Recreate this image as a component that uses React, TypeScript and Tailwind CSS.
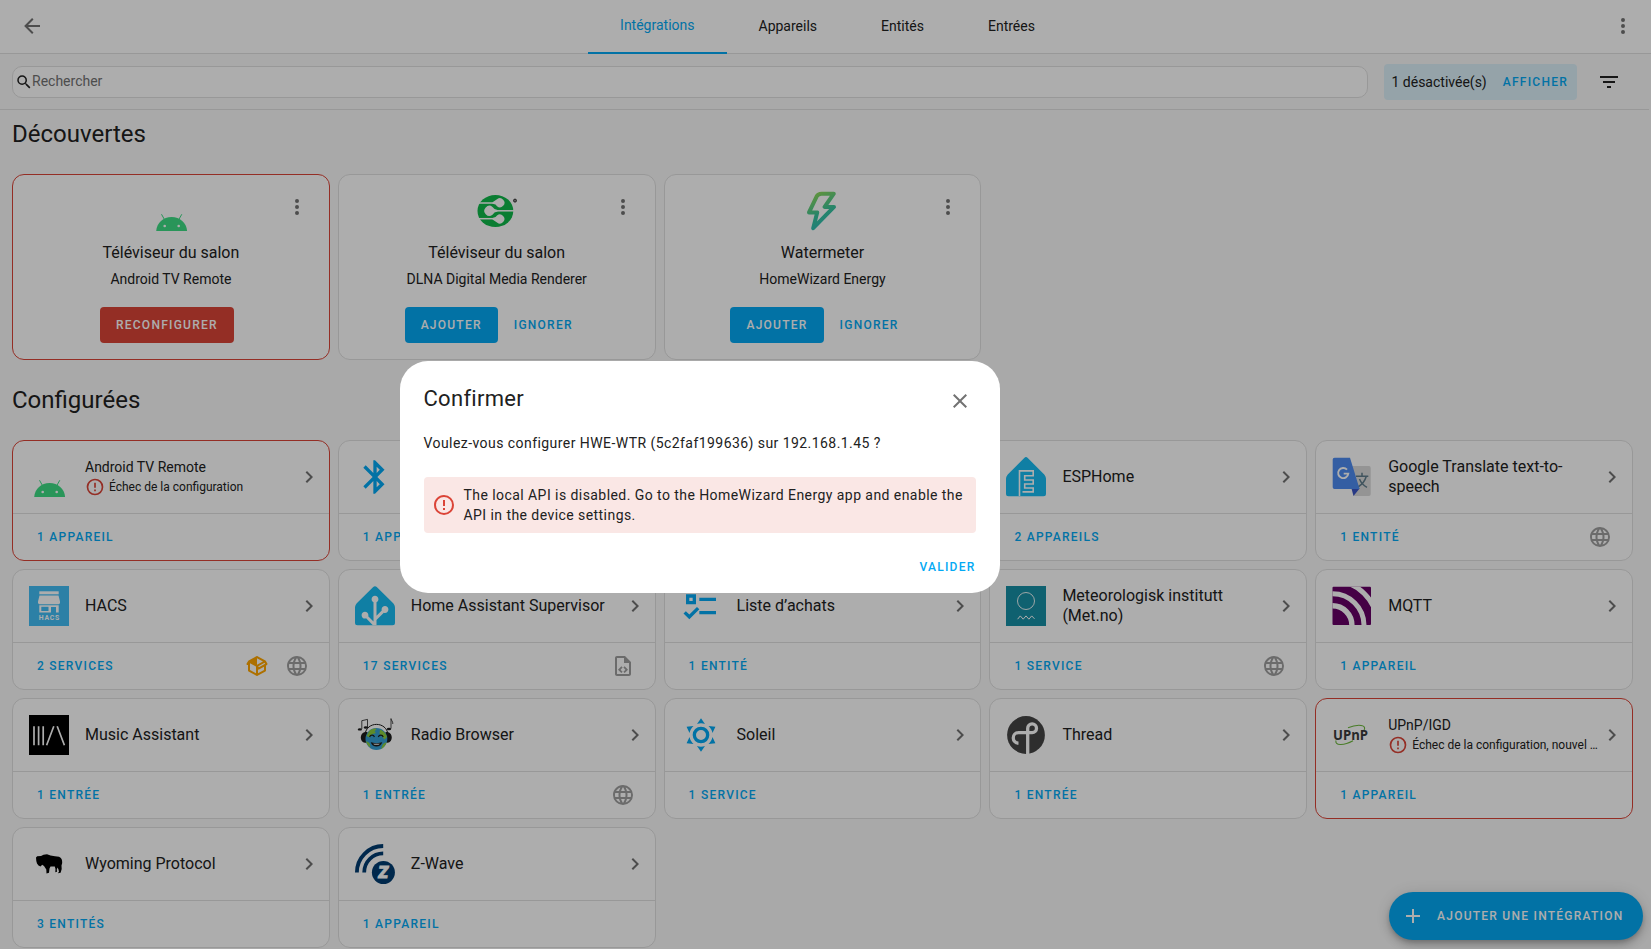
import React from "react";

const paths = {
  back: "M20,11V13H8L13.5,18.5L12.08,19.92L4.16,12L12.08,4.08L13.5,5.5L8,11H20Z",
  dots: "M12,16A2,2 0 0,1 14,18A2,2 0 0,1 12,20A2,2 0 0,1 10,18A2,2 0 0,1 12,16M12,10A2,2 0 0,1 14,12A2,2 0 0,1 12,14A2,2 0 0,1 10,12A2,2 0 0,1 12,10M12,4A2,2 0 0,1 14,6A2,2 0 0,1 12,8A2,2 0 0,1 10,6A2,2 0 0,1 12,4Z",
  magnify:
    "M9.5,3A6.5,6.5 0 0,1 16,9.5C16,11.11 15.41,12.59 14.44,13.73L14.71,14H15.5L20.5,19L19,20.5L14,15.5V14.71L13.73,14.44C12.59,15.41 11.11,16 9.5,16A6.5,6.5 0 0,1 3,9.5A6.5,6.5 0 0,1 9.5,3M9.5,5C7,5 5,7 5,9.5C5,12 7,14 9.5,14C12,14 14,12 14,9.5C14,7 12,5 9.5,5Z",
  filter: "M6,13H18V11H6M3,6V8H21V6M10,18H14V16H10V18Z",
  web: "M16.36,14C16.44,13.34 16.5,12.68 16.5,12C16.5,11.32 16.44,10.66 16.36,10H19.74C19.9,10.64 20,11.31 20,12C20,12.69 19.9,13.36 19.74,14M14.59,19.56C15.19,18.45 15.65,17.25 15.97,16H18.92C17.96,17.65 16.43,18.93 14.59,19.56M14.34,14H9.66C9.56,13.34 9.5,12.68 9.5,12C9.5,11.32 9.56,10.65 9.66,10H14.34C14.43,10.65 14.5,11.32 14.5,12C14.5,12.68 14.43,13.34 14.34,14M12,19.96C11.17,18.76 10.5,17.43 10.09,16H13.91C13.5,17.43 12.83,18.76 12,19.96M8,8H5.08C6.03,6.34 7.57,5.06 9.4,4.44C8.8,5.55 8.35,6.75 8,8M5.08,16H8C8.35,17.25 8.8,18.45 9.4,19.56C7.57,18.93 6.03,17.65 5.08,16M4.26,14C4.1,13.36 4,12.69 4,12C4,11.31 4.1,10.64 4.26,10H7.64C7.56,10.66 7.5,11.32 7.5,12C7.5,12.68 7.56,13.34 7.64,14M12,4.03C12.83,5.23 13.5,6.57 13.91,8H10.09C10.5,6.57 11.17,5.23 12,4.03M18.92,8H15.97C15.65,6.75 15.19,5.55 14.59,4.44C16.43,5.07 17.96,6.34 18.92,8M12,2C6.47,2 2,6.5 2,12A10,10 0 0,0 12,22A10,10 0 0,0 22,12A10,10 0 0,0 12,2Z",
  fileCode:
    "M14 2H6C4.89 2 4 2.9 4 4V20C4 21.11 4.89 22 6 22H18C19.11 22 20 21.11 20 20V8L14 2M18 20H6V4H13V9H18V20M9.54 15.65L11.63 17.74L10.35 19L7 15.65L10.35 12.3L11.63 13.56L9.54 15.65M17 15.65L13.65 19L12.38 17.74L14.47 15.65L12.38 13.56L13.65 12.3L17 15.65Z",
  pack: "M2,10.96C1.5,10.68 1.35,10.07 1.63,9.59L3.13,7C3.24,6.8 3.41,6.66 3.6,6.58L11.43,2.18C11.59,2.06 11.79,2 12,2C12.21,2 12.41,2.06 12.57,2.18L20.47,6.62C20.66,6.72 20.82,6.88 20.91,7.08L22.36,9.6C22.64,10.08 22.47,10.69 22,10.96L21,11.54V16.5C21,16.88 20.79,17.21 20.47,17.38L12.57,21.82C12.41,21.94 12.21,22 12,22C11.79,22 11.59,21.94 11.43,21.82L3.53,17.38C3.21,17.21 3,16.88 3,16.5V10.96C2.7,11.13 2.32,11.14 2,10.96M12,4.15V4.15L12,10.85V10.85L17.96,7.5L12,4.15M5,15.91L11,19.29V12.58L5,9.21V15.91M19,15.91V12.69L14,15.59C13.67,15.77 13.3,15.76 13,15.6V19.29L19,15.91M13.85,13.36L20.13,9.73L19.55,8.72L13.27,12.35L13.85,13.36Z",
  alert:
    "M11,15H13V17H11V15M11,7H13V13H11V7M12,2C6.47,2 2,6.5 2,12A10,10 0 0,0 12,22A10,10 0 0,0 22,12A10,10 0 0,0 12,2M12,20A8,8 0 0,1 4,12A8,8 0 0,1 12,4A8,8 0 0,1 20,12A8,8 0 0,1 12,20Z",
  chevron: "M8.59,16.58L13.17,12L8.59,7.41L10,6L16,12L10,18L8.59,16.58Z",
  close:
    "M19,6.41L17.59,5L12,10.59L6.41,5L5,6.41L10.59,12L5,17.59L6.41,19L12,13.41L17.59,19L19,17.59L13.41,12L19,6.41Z",
  plus: "M19,13H13V19H11V13H5V11H11V5H13V11H19V13Z",
  bluetooth:
    "M14.88,16.29L13,18.17V14.41M13,5.83L14.88,7.71L13,9.58M17.71,7.71L12,2H11V9.58L6.41,5L5,6.41L10.59,12L5,17.58L6.41,19L11,14.41V22H12L17.71,16.29L13.41,12L17.71,7.71Z",
  list: "M3,5H9V11H3V5M5,7V9H7V7H5M11,7H21V9H11V7M11,15H21V17H11V15M5,20L1.5,16.5L2.91,15.09L5,17.17L9.59,12.59L11,14L5,20Z",
  sun: "M12,7A5,5 0 0,1 17,12A5,5 0 0,1 12,17A5,5 0 0,1 7,12A5,5 0 0,1 12,7M12,9A3,3 0 0,0 9,12A3,3 0 0,0 12,15A3,3 0 0,0 15,12A3,3 0 0,0 12,9M12,2L14.39,5.42C13.65,5.15 12.84,5 12,5C11.16,5 10.35,5.15 9.61,5.42L12,2M3.34,7L7.5,6.65C6.9,7.16 6.36,7.78 5.94,8.5C5.5,9.24 5.25,10 5.11,10.79L3.34,7M3.36,17L5.12,13.23C5.26,14 5.53,14.78 5.95,15.5C6.37,16.24 6.91,16.86 7.5,17.37L3.36,17M20.65,7L18.88,10.79C18.74,10 18.47,9.23 18.05,8.5C17.63,7.78 17.1,7.15 16.5,6.64L20.65,7M20.64,17L16.5,17.36C17.09,16.85 17.62,16.22 18.04,15.5C18.46,14.77 18.73,14 18.87,13.21L20.64,17M12,22L9.59,18.56C10.33,18.83 11.14,19 12,19C12.82,19 13.63,18.83 14.37,18.56L12,22Z",
};

function Icon({ name, className = "size-6" }: { name: keyof typeof paths; className?: string }) {
  return (
    <svg viewBox="0 0 24 24" className={`${className} shrink-0 fill-current`}>
      <path d={paths[name]} />
    </svg>
  );
}

function Logo({ children }: { children: React.ReactNode }) {
  return (
    <svg viewBox="0 0 40 40" className="size-10 shrink-0">
      {children}
    </svg>
  );
}

const AndroidLogo = () => (
  <Logo>
    <g transform="translate(.5 0)">
      <path d="M4.700 40C5.300 31.800 11.800 26 20.100 26S35 31.800 35.600 40Z" fill="#3ddc84" />
      <path d="M10.200 23.600l2.800 5M30.100 23.600l-2.800 5" stroke="#3ddc84" strokeWidth="1" strokeLinecap="round" />
      <circle cx="13.200" cy="35" r="1.300" fill="#fff" />
      <circle cx="27.200" cy="35" r="1.300" fill="#fff" />
    </g>
  </Logo>
);

const DlnaLogo = () => (
  <Logo>
    <ellipse cx="18.400" cy="20" rx="17.900" ry="16.100" fill="#0fb84a" />
    <g stroke="#fff" strokeWidth="1.500" fill="none">
      <path d="M2 12H18" />
      <path d="M1 27.700H18" />
      <path d="M14 19.800H37" />
    </g>
    <path d="M15.500 11.300L20 8.300A4.500 4.500 0 1 1 20 15.200L18.500 13.600L15.500 12.700Z" fill="#fff" />
    <path d="M15.500 28.400L20 31.500A4.500 4.500 0 1 0 20 24.500L18.500 26.100L15.500 27Z" fill="#fff" />
    <path d="M20.500 19.100L17.500 18L15.500 15.900A5 5 0 1 0 15.500 23.700L17.500 21.600L20.500 20.500Z" fill="#fff" />
    <circle cx="38" cy="9.600" r="1.500" fill="#888" stroke="#333" strokeWidth="1" />
  </Logo>
);

const HomeWizardLogo = () => (
  <Logo>
    <defs>
      <linearGradient id="bolt" x1="8" y1="2" x2="24" y2="34" gradientUnits="userSpaceOnUse">
        <stop offset="0" stopColor="#98dc53" />
        <stop offset=".65" stopColor="#39c49d" />
        <stop offset="1" stopColor="#30bdb4" />
      </linearGradient>
    </defs>
    <path
      d="M19.500 2.700H31.800L22.600 15.900H32L11.200 37.200L15.200 21.400H7L14.700 5.300Q16.200 2.700 19.500 2.700Z"
      fill="none"
      stroke="url(#bolt)"
      strokeWidth="4"
      strokeLinejoin="round"
    />
  </Logo>
);

const BluetoothLogo = () => <Icon name="bluetooth" className="size-10 text-[#03a9f4]" />;
const ListLogo = () => <Icon name="list" className="size-10 text-[#03a9f4]" />;
const SunLogo = () => <Icon name="sun" className="size-10 text-[#03a9f4]" />;

const EspHomeLogo = () => (
  <Logo>
    <g transform="translate(0 -.8)">
      <path
        d="M40 37.460a2.500 2.500 0 0 1-2.500 2.500H2.500a2.500 2.500 0 0 1-2.500-2.500v-15c0-1.375.795-3.295 1.768-4.268l16.464-16.464a2.500 2.500 0 0 1 3.535 0l16.465 16.465c.972.972 1.768 2.893 1.768 4.268Z"
        fill="#18bcf2"
      />
      <path d="M13.500 39.900V14.700H27.200V19.500H18.700V23.800H27.200V27.800H18.700V31.800H27.200V35.700H16.500" fill="none" stroke="#fff" strokeWidth="1.600" />
    </g>
  </Logo>
);

const HomeAssistantLogo = () => (
  <svg viewBox="0 5 240 240" className="size-10 shrink-0">
    <path
      fill="#18bcf2"
      d="M240 224.762a15 15 0 0 1-15 15H15a15 15 0 0 1-15-15v-90c0-8.250 4.770-19.769 10.610-25.609l98.780-98.781c5.830-5.830 15.380-5.830 21.210 0l98.790 98.790c5.830 5.830 10.610 17.360 10.610 25.610v90Z"
    />
    <path
      fill="#fff"
      d="m107.270 239.762-40.630-40.630c-2.090.72-4.320 1.130-6.640 1.130-11.300 0-20.500-9.200-20.500-20.500s9.200-20.500 20.500-20.500 20.500 9.200 20.500 20.500c0 2.330-.41 4.560-1.130 6.650l31.630 31.630v-115.880c-6.800-3.340-11.500-10.320-11.500-18.390 0-11.300 9.200-20.500 20.500-20.500s20.500 9.200 20.500 20.500c0 8.070-4.700 15.050-11.500 18.390v81.270l31.460-31.460c-.62-1.960-.96-4.040-.96-6.200 0-11.300 9.200-20.500 20.500-20.500s20.500 9.200 20.500 20.500-9.200 20.500-20.500 20.500c-2.500 0-4.880-.47-7.090-1.290L129 208.892v30.880z"
    />
  </svg>
);

const TranslateLogo = () => (
  <Logo>
    <path d="M16 9H37a1.700 1.700 0 0 1 1.700 1.700V37.300A1.700 1.700 0 0 1 37 39H21.500Z" fill="#dbdbdb" />
    <path d="M24 19.200H36.300M30 15.800V19.200M34.200 19.500C33 24 30 27.500 26 30M27.500 22C29 26 31.500 28.500 35 30.300" fill="none" stroke="#607d8b" strokeWidth="1.500" />
    <path d="M19.500 31.500H27.600L21.500 39Z" fill="#3a54c4" />
    <path d="M2.500 .8H18L27.600 32H2.500A1.800 1.800 0 0 1 .7 30.200V2.600A1.800 1.800 0 0 1 2.500 .8Z" fill="#4d8bf0" />
    <path d="M15 12.600A5.100 5.100 0 1 0 16.300 16.600H11.700" fill="none" stroke="#fff" strokeWidth="1.900" />
  </Logo>
);

const HacsLogo = () => (
  <Logo>
    <rect width="40" height="40" fill="#41bdf5" />
    <g fill="#fff">
      <path d="M10.300 5.300H29.700V8.300H10.300Z" />
      <path d="M10.500 9.500H29.500L31 15.500V17.300L29.700 18.300H10.300L9 17.300V15.500Z" />
      <path d="M10.300 19.300H29.700V26.500H27V21H22V26.500H10.300Z" />
      <rect x="23.500" y="22" width="2" height="4.500" fill="#41bdf5" />
    </g>
    <rect x="12.300" y="20.800" width="7.200" height="4.200" fill="#41bdf5" />
    <text x="9.800" y="34" fontSize="6.800" fontWeight="700" textLength="20.300" fill="#fff" fontFamily="Roboto, sans-serif">
      HACS
    </text>
  </Logo>
);

const MetLogo = () => (
  <Logo>
    <rect width="40" height="40" fill="#178fa5" />
    <circle cx="20" cy="15" r="8.500" fill="none" stroke="#fff" strokeWidth=".9" />
    <path d="M11.600 33.200L14.300 29.900L17.200 33.200L20 29.900L22.900 33.200L25.700 29.900L28.500 32.800" fill="none" stroke="#fff" strokeWidth="1" />
  </Logo>
);

const MqttLogo = () => (
  <Logo>
    <defs>
      <clipPath id="mqtt">
        <rect x=".5" y=".8" width="38.500" height="38.300" rx="1" />
      </clipPath>
    </defs>
    <g clipPath="url(#mqtt)">
      <rect width="40" height="40" fill="#660066" />
      <g fill="none" stroke="#fff">
        <circle cx=".5" cy="39.200" r="19.400" strokeWidth="5.400" />
        <circle cx=".5" cy="39.200" r="31.500" strokeWidth="5" />
        <circle cx=".5" cy="39.200" r="44.800" strokeWidth="5" />
      </g>
    </g>
  </Logo>
);

const MusicLogo = () => (
  <Logo>
    <rect width="40" height="40" />
    <path d="M5 11.300V30.200M9.600 11.300V30.200M14.200 11.300V30.200M17.600 30.200L24.800 11.300M28.200 11.300L35.400 30.200" fill="none" stroke="#fff" strokeWidth="1.700" />
  </Logo>
);

const RadioLogo = () => (
  <Logo>
    <path d="M10 19.500C11.500 6 31.500 6 33 19.500" fill="none" stroke="#1c1c1c" strokeWidth="1" />
    <path d="M10 17H12.500V27.800H10C4.400 27 4.400 18 10 17ZM32.600 17H30.500V27.800H32.600C38.200 27 38.200 18 32.600 17Z" fill="#1c1c1c" />
    <circle cx="21.400" cy="24" r="10.900" fill="#35a0d6" />
    <path d="M14 16.500C16.500 13.500 20 13.200 21.500 14L19.500 16.500L21 18L17.500 19L14.500 22.500L11.500 21ZM25 14.500C28.500 15.700 31 18.500 32 22L29.500 24.500L27 21.500L24.500 18.500ZM11.200 26L14.500 28L15.500 32.500C13 31 11.500 29 11.200 26ZM28 29L31.700 27C30.500 31 28.500 32.800 26 34Z" fill="#8ccf3f" />
    <path d="M14.600 22C15.300 19.600 18.700 19.600 19.400 22M23.400 22C24.100 19.600 27.500 19.600 28.200 22" fill="none" stroke="#1c1c1c" strokeWidth="1.200" />
    <path d="M15.700 27C18.500 28.500 24.500 28.500 27.300 27C26 33 17 33 15.700 27Z" fill="#1c1c1c" />
    <path d="M18 28.700H25L23.500 29.700H19.500Z" fill="#fff" />
    <path d="M6.800 14V5.700L12.500 4.400V13M36 13.500V3.600C36 5.500 38 6 37.800 9" fill="none" stroke="#1c1c1c" strokeWidth=".8" />
    <ellipse cx="4.900" cy="14.400" rx="2" ry="1.200" fill="#1c1c1c" />
    <ellipse cx="10.800" cy="12.500" rx="2" ry="1.200" fill="#1c1c1c" />
    <ellipse cx="34" cy="14" rx="2.200" ry="1.200" fill="#1c1c1c" />
  </Logo>
);

const ThreadLogo = () => (
  <Logo>
    <circle cx="20" cy="20" r="18.900" fill="#454545" />
    <path d="M21.700 40V13.300A4.400 4.400 0 1 1 26.100 17.700H12.500A5.200 5.200 0 0 0 12.500 28.200" fill="none" stroke="#fff" strokeWidth="3.300" />
  </Logo>
);

const UpnpLogo = () => (
  <Logo>
    <path d="M16 12.800C24 9.300 31.500 9.500 32.500 12.500C32.800 13.600 32.500 14.500 32 15.300M4 25.500C2.500 30.300 11 31.300 21 25.800" fill="none" stroke="#6cb83c" strokeWidth="1.100" />
    <text x="1" y="25.200" fontSize="13.800" fontWeight="700" textLength="35" lengthAdjust="spacingAndGlyphs" fill="#3a3a3c" fontFamily="Open Sans, sans-serif">
      UPnP
    </text>
  </Logo>
);

const WyomingLogo = () => (
  <Logo>
    <path d="M7 13.500L8.200 12.300L12 12L14.500 10.800L18 10.200L21.500 11.500L26 12.300L30 12.800C32.500 13.800 33.300 16 33.200 19L32.500 21.500L32.700 25L31.600 28.800L28.800 29.300L30 27.800L29.500 25.500L28.500 23.500L27.800 25.500L28 27.800L26.300 28.300L26.500 25L25.800 22.500L21.500 22.500L20.500 24.500L20 28.800L17.500 29.400L17.300 25.500L16 23.500L15 22L13.200 20.800L11.500 22.600L9.500 21.500L8 19.500L7.300 17Z" />
  </Logo>
);

const ZWaveLogo = () => (
  <Logo>
    <path d="M1.900 28.500A26.400 26.400 0 0 1 28.200 2M9.200 28.500A19 19 0 0 1 28.200 9.400" fill="none" stroke="#003c71" strokeWidth="3.800" />
    <circle cx="28.400" cy="28.500" r="12.600" fill="#fff" />
    <circle cx="28.400" cy="28.500" r="11.500" fill="#003c71" />
    <text x="28.100" y="34.300" textAnchor="middle" fontSize="16.500" fontWeight="900" fontStyle="italic" fill="#fff" stroke="#fff" strokeWidth=".9" fontFamily="Roboto, sans-serif">
      Z
    </text>
  </Logo>
);

const buttonText = "text-xs leading-9 font-medium uppercase tracking-[1.25px]";

type Discovery = { logo: React.ReactNode; name: string; domain: string; error?: boolean };

const discoveries: Discovery[] = [
  { logo: <AndroidLogo />, name: "Téléviseur du salon", domain: "Android TV Remote", error: true },
  { logo: <DlnaLogo />, name: "Téléviseur du salon", domain: "DLNA Digital Media Renderer" },
  { logo: <HomeWizardLogo />, name: "Watermeter", domain: "HomeWizard Energy" },
];

function DiscoveryCard({ logo, name, domain, error }: Discovery) {
  return (
    <div
      className={`relative flex h-[186px] flex-col items-center rounded-xl border bg-white pt-4 ${
        error ? "border-[#db4437]" : "border-[#e0e0e0]"
      }`}
    >
      <button className="absolute top-2 right-2 flex size-12 items-center justify-center text-[#727272]">
        <Icon name="dots" />
      </button>
      {logo}
      <h2 className="mt-2.5 text-base leading-6">{name}</h2>
      <p className="mt-1 text-sm leading-5">{domain}</p>
      <div className="mt-[18px] flex">
        {error ? (
          <button className={`${buttonText} mr-2 rounded bg-[#db4437] px-4 text-white`}>Reconfigurer</button>
        ) : (
          <>
            <button className={`${buttonText} mr-2 rounded bg-[#03a9f4] px-4 text-white`}>Ajouter</button>
            <button className={`${buttonText} mr-2 px-2 text-[#03a9f4]`}>Ignorer</button>
          </>
        )}
      </div>
    </div>
  );
}

type Entry = {
  logo: React.ReactNode;
  name: string;
  action: string;
  error?: string;
  badges?: ("web" | "fileCode" | "pack")[];
};

const entries: Entry[] = [
  { logo: <AndroidLogo />, name: "Android TV Remote", action: "1 appareil", error: "Échec de la configuration" },
  { logo: <BluetoothLogo />, name: "Bluetooth", action: "1 appareil" },
  { logo: null, name: "", action: "" },
  { logo: <EspHomeLogo />, name: "ESPHome", action: "2 appareils" },
  { logo: <TranslateLogo />, name: "Google Translate text-to-speech", action: "1 entité", badges: ["web"] },
  { logo: <HacsLogo />, name: "HACS", action: "2 services", badges: ["pack", "web"] },
  { logo: <HomeAssistantLogo />, name: "Home Assistant Supervisor", action: "17 services", badges: ["fileCode"] },
  { logo: <ListLogo />, name: "Liste d’achats", action: "1 entité" },
  { logo: <MetLogo />, name: "Meteorologisk institutt (Met.no)", action: "1 service", badges: ["web"] },
  { logo: <MqttLogo />, name: "MQTT", action: "1 appareil" },
  { logo: <MusicLogo />, name: "Music Assistant", action: "1 entrée" },
  { logo: <RadioLogo />, name: "Radio Browser", action: "1 entrée", badges: ["web"] },
  { logo: <SunLogo />, name: "Soleil", action: "1 service" },
  { logo: <ThreadLogo />, name: "Thread", action: "1 entrée" },
  { logo: <UpnpLogo />, name: "UPnP/IGD", action: "1 appareil", error: "Échec de la configuration, nouvel essai" },
  { logo: <WyomingLogo />, name: "Wyoming Protocol", action: "3 entités" },
  { logo: <ZWaveLogo />, name: "Z-Wave", action: "1 appareil" },
];

function EntryCard({ logo, name, action, error, badges = [] }: Entry) {
  return (
    <div
      className={`flex h-[121px] min-w-0 flex-col rounded-xl border bg-white ${
        error ? "border-[#db4437]" : "border-[#e0e0e0]"
      }`}
    >
      <div className="flex h-[73px] shrink-0 items-center border-b border-[#e0e0e0] pr-2 pl-4">
        {logo}
        <div className="mr-[-2px] ml-4 min-w-0 flex-1">
          {error ? (
            <>
              <h2 className="text-sm leading-5">{name}</h2>
              <div className="flex h-5 items-center">
                <Icon name="alert" className="size-5 text-[#db4437]" />
                <span className="ml-1 truncate text-xs leading-5">{error}</span>
              </div>
            </>
          ) : (
            <h2 className="text-base leading-5">{name}</h2>
          )}
        </div>
        <Icon name="chevron" className="size-6 text-[#727272]" />
      </div>
      <div className="flex h-[46px] items-center justify-between pr-5 pl-6">
        <button className={`${buttonText} text-[#03a9f4]`}>{action}</button>
        <div className="flex gap-4">
          {badges.map((badge) => (
            <Icon key={badge} name={badge} className={badge === "pack" ? "size-6 text-[#ffa600]" : "size-6 text-[#9e9e9e]"} />
          ))}
        </div>
      </div>
    </div>
  );
}

export default function App() {
  return (
    <div className="relative h-[949px] w-[1651px] overflow-hidden bg-[#fafafa] font-['Roboto',sans-serif] text-[#212121]">
      <header className="flex h-[54px] items-center border-b border-[#e0e0e0] bg-white pr-1 pl-2 text-[#727272]">
        <button className="mb-px flex size-12 items-center justify-center">
          <Icon name="back" />
        </button>
        <nav className="flex h-[53px] flex-1 justify-center text-sm text-[#212121]">
          <a className="-mb-px h-[54px] border-b-2 border-[#03a9f4] px-8 leading-[51px] text-[#03a9f4]">Intégrations</a>
          <a className="px-8 leading-[53px]">Appareils</a>
          <a className="px-8 leading-[53px]">Entités</a>
          <a className="px-8 leading-[53px]">Entrées</a>
        </nav>
        <button className="mb-px flex size-12 items-center justify-center">
          <Icon name="dots" />
        </button>
      </header>

      <div className="mr-0.5 flex h-14 items-center border-b border-[#e0e0e0] pr-4 pl-3">
        <div className="flex h-8 flex-1 items-center rounded-[10px] border border-[#e0e0e0] bg-white pl-0.5">
          <Icon name="magnify" className="size-[18px]" />
          <span className="mb-0.5 -ml-px text-sm leading-5 text-[#727272]">Rechercher</span>
        </div>
        <div className="mr-2 ml-4 flex h-9 items-center rounded bg-[#dcf0f9] pr-[9px] pl-[7.500px]">
          <span className="mr-2 text-sm">1 désactivée(s)</span>
          <button className={`${buttonText} pl-2 text-[#03a9f4]`}>Afficher</button>
        </div>
        <button className="flex size-12 items-center justify-center">
          <Icon name="filter" />
        </button>
      </div>

      <main className="mr-[18px] ml-3">
        <h1 className="mt-2 text-2xl leading-8">Découvertes</h1>
        <div className="mt-6 grid grid-cols-5 gap-2">
          {discoveries.map((item) => (
            <DiscoveryCard key={item.domain} {...item} />
          ))}
        </div>
        <h1 className="mt-6 text-2xl leading-8">Configurées</h1>
        <div className="mt-6 grid grid-cols-5 gap-2">
          {entries.map((item, index) => (
            <EntryCard key={index} {...item} />
          ))}
        </div>
      </main>

      <button className="absolute right-2 bottom-[9px] flex h-12 w-[254px] items-center rounded-full bg-[#03a9f4] pl-3 text-white shadow-[0_3px_5px_-1px_rgba(0,0,0,.2),0_6px_10px_0_rgba(0,0,0,.14),0_1px_18px_0_rgba(0,0,0,.12)]">
        <Icon name="plus" />
        <span className={`${buttonText} ml-3 whitespace-nowrap`}>Ajouter une intégration</span>
      </button>

      <div className="absolute inset-0 bg-black/32" />

      <div role="dialog" className="absolute top-[361px] left-[399.500px] flex h-[232px] w-[600px] flex-col rounded-[28px] bg-white px-6">
        <div className="flex items-start justify-between">
          <h2 className="mt-[22px] text-[22px] leading-8 tracking-[.3px]">Confirmer</h2>
          <button className="mt-4 -mr-2 flex size-12 items-center justify-center text-[#727272]">
            <Icon name="close" />
          </button>
        </div>
        <p className="mt-1.5 text-sm leading-6 tracking-[.4375px]">Voulez-vous configurer HWE-WTR (5c2faf199636) sur 192.168.1.45 ?</p>
        <div className="mt-[22px] flex h-14 items-center rounded bg-[#fae7e5] px-2">
          <Icon name="alert" className="size-6 text-[#db4437]" />
          <p className="ml-2 text-sm leading-5 tracking-[.4375px]">
            The local API is disabled. Go to the HomeWizard Energy app and enable the API in the device settings.
          </p>
        </div>
        <button className={`${buttonText} mt-4 self-end text-[#03a9f4]`}>Valider</button>
      </div>
    </div>
  );
}
